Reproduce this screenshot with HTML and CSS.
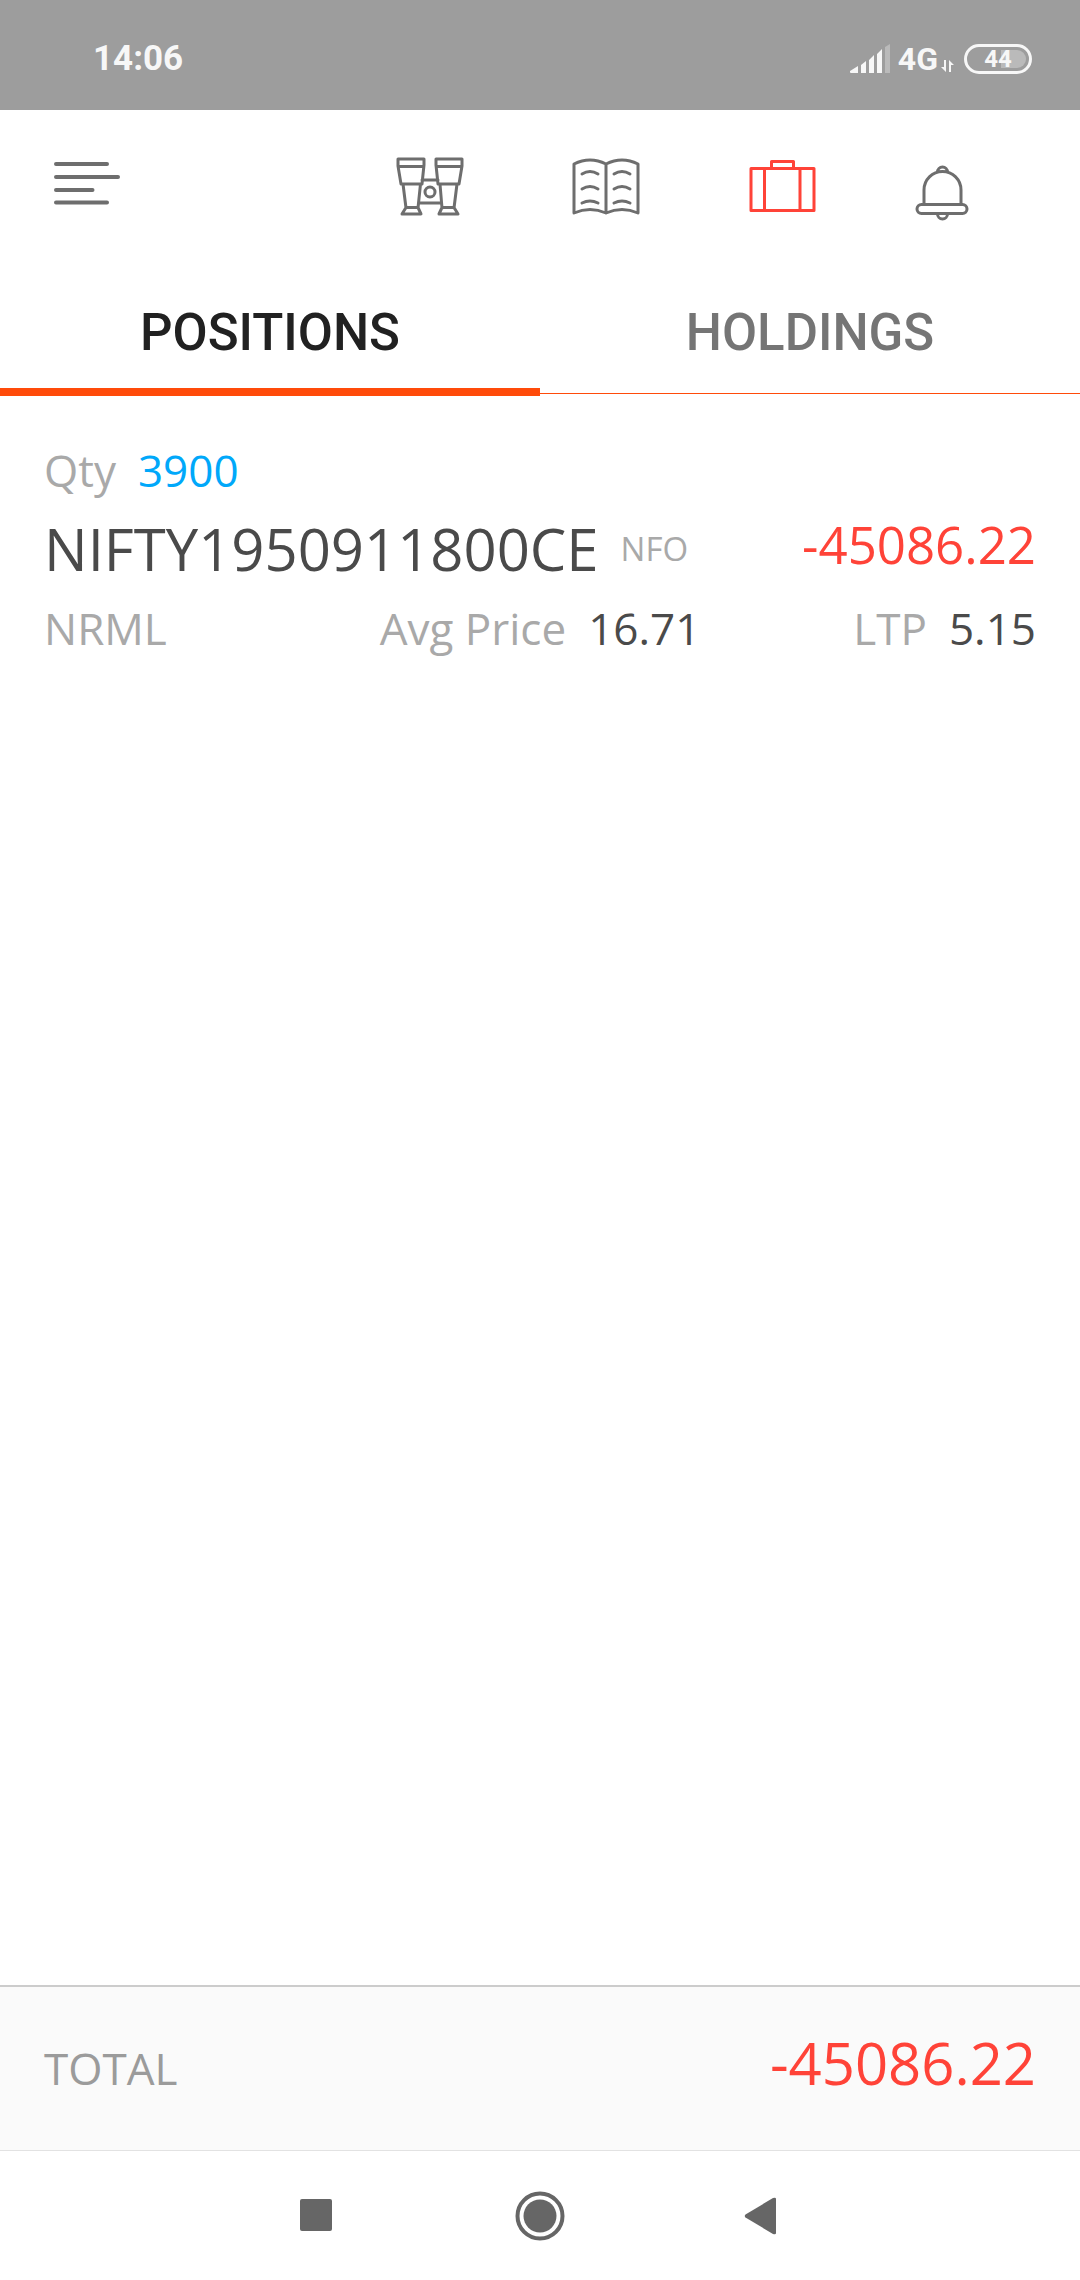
FILE: index.html
```html
<!DOCTYPE html>
<html lang="en">
<head>
<meta charset="utf-8">
<meta name="viewport" content="width=device-width, initial-scale=1">
<title>Positions</title>
<link rel="stylesheet" href="styles.css">
</head>
<body>
<div class="status-bar">
  <time class="status-time">14:06</time>
  <div class="status-icons">
    <svg class="signal" width="40" height="30" viewBox="0 0 40 30" aria-hidden="true">
      <path d="M0 27 L8 22V29H1Q0 29 0 28Z M11 21L16 17V29H11Z M19 16L24 11V29H19Z M27 10L32 5V29H27Z"/>
      <path class="dim" d="M35 3L40 0V29H35Z"/>
    </svg>
    <span class="network">4G</span>
    <svg class="data" width="14" height="30" viewBox="0 0 14 30" aria-hidden="true">
      <path d="M3 16H5V28L0 23H3Z M8 28V16L13 21H10V28Z"/>
    </svg>
    <span class="battery">
      <svg width="68" height="30" viewBox="0 0 68 30" aria-hidden="true">
        <rect class="outline" x="1.5" y="1.5" width="65" height="27" rx="13.5"/>
        <path class="dim" d="M37 6H53A9 9 0 0 1 53 24H37Z"/>
      </svg>
      <span class="battery-level">44</span>
    </span>
  </div>
</div>

<header class="app-bar">
  <button class="icon-button menu" type="button" aria-label="Menu">
    <svg width="68" height="44" viewBox="0 0 68 44"><path class="thick" d="M4 3H55M4 16H66M4 29H40.500M4 41.500H55"/></svg>
  </button>
  <nav class="app-nav">
    <button class="icon-button" type="button" aria-label="Market watch">
      <svg width="68" height="60" viewBox="0 0 68 60">
        <path d="M2 3H28V9L26 28H5L2 10Z M2.500 10.500H27.500M40 3H66V10L63 28H42L40 9Z M40.500 10.500H65.500 M7 28L10 52M24.500 28L22 52M44 28L46 52M61 28L58 52 M10 51.500H22L25 58H6Z M46 51.500H58L62 58H43Z M26 24H42M23 47H45"/>
        <circle cx="34" cy="36" r="5"/>
      </svg>
    </button>
    <button class="icon-button" type="button" aria-label="Orders">
      <svg width="68" height="60" viewBox="0 0 68 60">
        <path d="M34 8Q18 0 2 8V57Q18 50 34 57Q50 50 66 57V8Q50 0 34 8V57"/>
        <path d="M10 18Q18 13 26 18M10 33Q18 28 26 33M10 47Q18 43 26 47M42 18Q50 13 58 18M42 33Q50 28 58 33M42 47Q50 43 58 47"/>
      </svg>
    </button>
    <button class="icon-button current" type="button" aria-label="Portfolio" aria-current="page">
      <svg width="68" height="60" viewBox="0 0 68 60">
        <path d="M3 12.500H66V54.500H3ZM16.500 12.500V54.500M52 12.500V54.500M23.500 12V5.500H45.500V12"/>
      </svg>
    </button>
    <button class="icon-button bell" type="button" aria-label="Alerts">
      <svg width="54" height="60" viewBox="0 0 54 60">
        <path d="M9 42V28A18.500 18.500 0 0 1 46 28V42M22.500 10A5 5 0 1 1 32.500 10M22.500 52A5 5 0 0 0 32.500 52"/>
        <rect x="2" y="42.500" width="50" height="9" rx="4.500"/>
      </svg>
    </button>
  </nav>
</header>

<div class="tabs" role="tablist">
  <button class="tab" id="positions-tab" type="button" role="tab" aria-selected="true" aria-controls="positions">POSITIONS</button>
  <button class="tab" type="button" role="tab" aria-selected="false">HOLDINGS</button>
</div>

<main class="positions" id="positions" role="tabpanel" aria-labelledby="positions-tab">
  <article class="position">
    <div class="pair"><span class="label">Qty</span><span class="quantity">3900</span></div>
    <div class="instrument">
      <h2 class="symbol">NIFTY1950911800CE</h2>
      <span class="exchange">NFO</span>
      <span class="pnl">-45086.22</span>
    </div>
    <div class="details">
      <span class="label">NRML</span>
      <div class="pair"><span class="label">Avg Price</span><span>16.71</span></div>
      <div class="pair end"><span class="label">LTP</span><span>5.15</span></div>
    </div>
  </article>
</main>

<footer class="total">
  <span>TOTAL</span>
  <strong class="total-value">-45086.22</strong>
</footer>

<nav class="system-nav" aria-label="System">
  <button class="system-button" type="button" aria-label="Recent apps">
    <svg width="50" height="50" viewBox="0 0 50 50"><rect x="9" y="8" width="32" height="32" rx="2"/></svg>
  </button>
  <button class="system-button" type="button" aria-label="Home">
    <svg width="50" height="50" viewBox="0 0 50 50"><circle cx="25" cy="25" r="16.500"/><circle class="ring" cx="25" cy="25" r="22.500"/></svg>
  </button>
  <button class="system-button" type="button" aria-label="Back">
    <svg width="50" height="50" viewBox="0 0 50 50"><path d="M6.500 26.500Q5 25 6.500 23.500L34 7Q37 6 37 8V42Q37 44 34 43Z"/></svg>
  </button>
</nav>
</body>
</html>
```
FILE: styles.css
```css
* { box-sizing: border-box; }

body {
  display: flex;
  flex-direction: column;
  min-height: 100vh;
  margin: 0;
  background: #fff;
  color: #4a4a4a;
  font: 44px/60px "Open Sans", "Noto Sans", sans-serif;
}

button {
  margin: 0;
  padding: 0;
  border: 0;
  background: none;
  font: inherit;
}

svg {
  display: block;
  flex: none;
}

/* Status bar */
.status-bar {
  display: flex;
  align-items: center;
  justify-content: space-between;
  height: 110px;
  padding: 8px 48px 0 93px;
  background: #9d9d9d;
  color: #f7f7f7;
  font: 700 35px/40px Roboto, sans-serif;
}

.status-icons {
  display: flex;
  align-items: center;
  fill: #f7f7f7;
}

.dim { fill: #bababa; }
.network { margin: 0 3px 0 8px; font-size: 32px; }
.data { margin-right: 9px; }
.battery { position: relative; }
.outline { fill: none; stroke: #f7f7f7; stroke-width: 3; }

.battery-level {
  position: absolute;
  inset: 0;
  font-size: 24px;
  line-height: 30px;
  text-align: center;
}

/* App bar */
.app-bar {
  display: flex;
  align-items: center;
  justify-content: space-between;
  height: 170px;
  padding: 0 112px 12px 52px;
}

.app-nav {
  display: flex;
  gap: 92px;
}

.icon-button {
  display: flex;
  justify-content: center;
  width: 84px;
  fill: none;
  stroke: #6e6e6e;
  stroke-width: 3;
  stroke-linecap: round;
  stroke-linejoin: round;
}

.icon-button.menu { width: auto; padding-bottom: 12px; }
.icon-button.current { stroke: #ff4338; }
.icon-button.bell { width: 52px; padding-top: 6px; }
.thick { stroke-width: 4; }

/* Tabs */
.tabs {
  display: flex;
  height: 114px;
  margin-bottom: 2px;
  border-bottom: 1px solid #ff4b0a;
}

.tab {
  position: relative;
  flex: 1;
  padding-bottom: 8px;
  color: #757575;
  font: 500 51px/60px Roboto, sans-serif;
}

.tab[aria-selected="true"] { color: #212121; }

.tab[aria-selected="true"]::after {
  content: "";
  position: absolute;
  right: 0;
  bottom: -3px;
  left: 0;
  height: 8px;
  background: #ff4b0a;
}

/* Positions */
.positions { flex: 1; }

.position {
  display: flex;
  flex-direction: column;
  gap: 8px;
  padding: 44px;
}

.pair {
  display: flex;
  gap: 22px;
}

.pair.end { justify-content: flex-end; }
.label, .exchange { color: #a9a9a9; }
.quantity { color: #00a8fa; }

.instrument {
  display: flex;
  align-items: center;
  gap: 22px;
}

.symbol {
  margin: 0;
  font-size: 58px;
  font-weight: 400;
  line-height: 82px;
}

.exchange { font-size: 33px; }

.pnl {
  align-self: flex-start;
  margin-left: auto;
  color: #ff4338;
  font-size: 51px;
  line-height: 72px;
}

.details {
  display: grid;
  grid-template-columns: 1fr auto 1fr;
}

/* Total */
.total {
  display: flex;
  align-items: baseline;
  justify-content: space-between;
  height: 166px;
  padding: 36px 44px 0;
  border-top: 2px solid #ccc;
  border-bottom: 1px solid #e2e2e2;
  background: #fafafa;
  color: #9b9b9b;
}

.total-value {
  color: #ff4338;
  font-size: 58px;
  font-weight: 400;
  line-height: 80px;
}

/* System navigation */
.system-nav {
  display: flex;
  align-items: center;
  justify-content: center;
  gap: 174px;
  height: 129px;
}

.system-button { fill: #666; }
.ring { fill: none; stroke: #666; stroke-width: 4; }
```
